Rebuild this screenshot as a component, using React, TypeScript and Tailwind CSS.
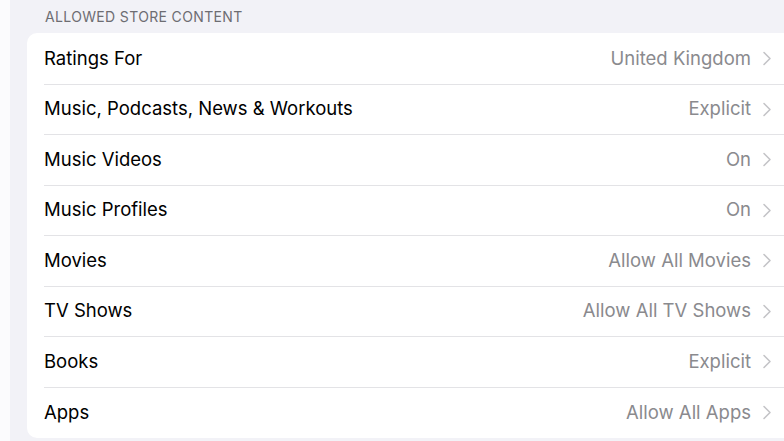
const rows: [string, string][] = [
  ["Ratings For", "United Kingdom"],
  ["Music, Podcasts, News & Workouts", "Explicit"],
  ["Music Videos", "On"],
  ["Music Profiles", "On"],
  ["Movies", "Allow All Movies"],
  ["TV Shows", "Allow All TV Shows"],
  ["Books", "Explicit"],
  ["Apps", "Allow All Apps"],
];

function Chevron() {
  return (
    <svg width="10" height="15" viewBox="0 0 10 15" fill="none" className="shrink-0">
      <path d="M2 1.5L8 7.5L2 13.5" stroke="#c4c4c7" strokeWidth="1.6" strokeLinecap="round" strokeLinejoin="round" />
    </svg>
  );
}

export default function App() {
  return (
    <div className="flex h-[441px] w-[784px] overflow-hidden bg-[#fbfbfd] font-['Inter',sans-serif]">
      <div className="ml-[10px] flex-1 bg-[#f2f2f7] pl-[17px]">
        <div className="h-[33px] pl-[18px] pt-[9px] text-[14px] leading-[16px] tracking-[0.35px] text-[#6d6d72]">
          ALLOWED STORE CONTENT
        </div>
        <div className="-mr-[20px] rounded-[10px] bg-white pt-[1px]">
          {rows.map(([label, value], i) => (
            <div key={label} className="pl-[17px]">
              <div
                className={
                  "flex h-[50.5px] items-center pr-[32px] " +
                  (i < rows.length - 1 ? "border-b border-[#e3e3e6]" : "")
                }
              >
                <span className="flex-1 text-[18.5px] text-black">{label}</span>
                <span className="mr-[11px] text-[18.5px] text-[#8a8a8e]">{value}</span>
                <Chevron />
              </div>
            </div>
          ))}
        </div>
      </div>
    </div>
  );
}
